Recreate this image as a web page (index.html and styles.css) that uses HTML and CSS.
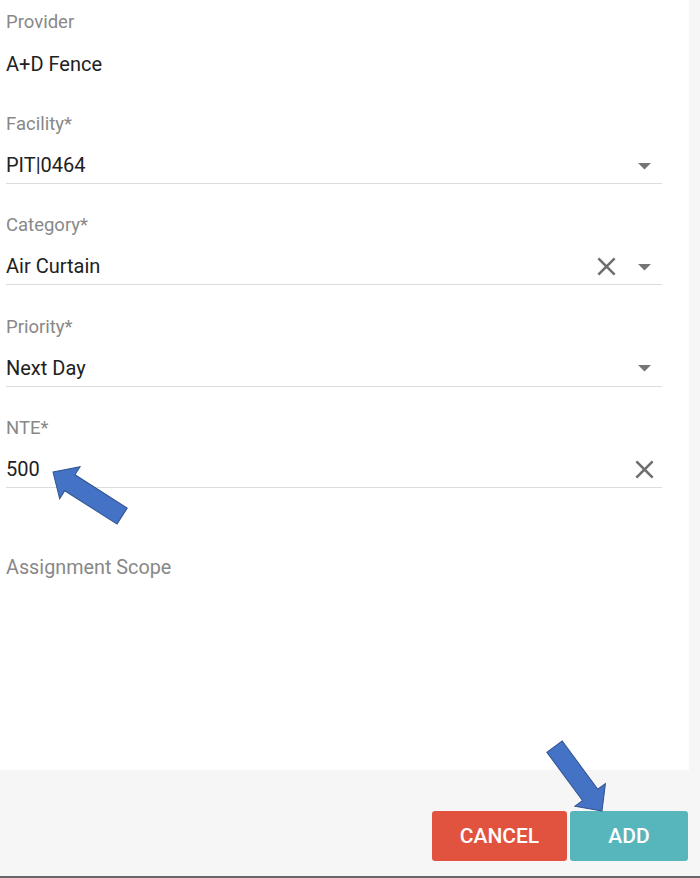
FILE: index.html
```html
<!DOCTYPE html>
<html lang="en">
<head>
    <meta charset="UTF-8">
    <meta name="viewport" content="width=device-width, initial-scale=1.0">
    <title>Add Assignment</title>
    <link rel="stylesheet" href="styles.css">
</head>
<body>
    <div class="panel">
        <div class="field provider">
            <div class="label">Provider</div>
            <div class="value-row">A+D Fence</div>
        </div>

        <div class="field">
            <div class="label">Facility*</div>
            <div class="value-row underlined">
                <span class="value">PIT|0464</span>
                <svg class="icon caret" viewBox="0 0 24 24"><path d="M7 10l5 5 5-5z"/></svg>
            </div>
        </div>

        <div class="field">
            <div class="label">Category*</div>
            <div class="value-row underlined">
                <span class="value">Air Curtain</span>
                <svg class="icon clear" viewBox="0 0 24 24"><path d="M19 6.41L17.59 5 12 10.59 6.41 5 5 6.41 10.59 12 5 17.59 6.41 19 12 13.41 17.59 19 19 17.59 13.41 12z"/></svg>
                <svg class="icon caret" viewBox="0 0 24 24"><path d="M7 10l5 5 5-5z"/></svg>
            </div>
        </div>

        <div class="field">
            <div class="label">Priority*</div>
            <div class="value-row underlined">
                <span class="value">Next Day</span>
                <svg class="icon caret" viewBox="0 0 24 24"><path d="M7 10l5 5 5-5z"/></svg>
            </div>
        </div>

        <div class="field">
            <div class="label">NTE*</div>
            <div class="value-row underlined">
                <span class="value">500</span>
                <svg class="icon clear" viewBox="0 0 24 24"><path d="M19 6.41L17.59 5 12 10.59 6.41 5 5 6.41 10.59 12 5 17.59 6.41 19 12 13.41 17.59 19 19 17.59 13.41 12z"/></svg>
            </div>
        </div>

        <div class="scope">Assignment Scope</div>
    </div>

    <div class="footer">
        <button class="btn cancel">Cancel</button>
        <button class="btn add">Add</button>
    </div>

    <!-- callout arrows drawn over the form -->
    <svg class="callouts" width="700" height="878" viewBox="0 0 700 878">
        <polygon transform="translate(53,472) rotate(32.5)" points="0,0 20,-19 20,-9.5 82,-9.5 82,9.5 20,9.5 20,19"/>
        <polygon transform="translate(602,811) rotate(233.6)" points="0,0 20,-19 20,-9.5 80,-9.5 80,9.5 20,9.5 20,19"/>
    </svg>
</body>
</html>
```

FILE: styles.css
```css
body {
    margin: 0;
    width: 700px;
    height: 878px;
    position: relative;
    overflow: hidden;
    background-color: #f6f6f6;
    font-family: Roboto, "Liberation Sans", sans-serif;
    color: #212121;
}
.panel {
    width: 689px;
    height: 770px;
    box-sizing: border-box;
    padding-top: 12px;
    padding-left: 6px;
    background-color: white;
}
.field {
    width: 656px;
    margin-bottom: 31.4px;
}
.provider {
    margin-bottom: 32px;
}
.label {
    font-size: 18.5px;
    line-height: 20px;
    color: #888;
}
.value-row {
    display: flex;
    align-items: center;
    height: 24px;
    margin-top: 19px;
    padding-bottom: 6px;
    border-bottom: 1px solid transparent;
    font-size: 20px;
    line-height: 24px;
}
.provider .value-row {
    margin-top: 20px;
    padding-bottom: 5px;
}
.underlined {
    border-bottom-color: #dcdcdc;
}
.value {
    flex: 1;
}
.icon {
    width: 31px;
    height: 31px;
    flex-shrink: 0;
}
.caret {
    fill: #757575;
    margin-right: 2px;
}
.clear {
    fill: #6e6e6e;
    margin-right: 2px;
}
.clear + .caret {
    margin-left: 5px;
}
.scope {
    padding-top: 37px;
    font-size: 19.8px;
    line-height: 22px;
    color: #888;
}
.footer {
    height: 108px;
    display: flex;
    justify-content: flex-end;
    align-items: flex-end;
    gap: 3px;
    padding-right: 12px;
    padding-bottom: 15px;
    box-sizing: border-box;
    border-bottom: 2px solid #666;
}
.btn {
    height: 50px;
    border: none;
    border-radius: 3px;
    color: white;
    font-family: Roboto, "Liberation Sans", sans-serif;
    font-size: 21px;
    font-weight: 500;
    text-transform: uppercase;
    cursor: pointer;
}
.cancel {
    width: 135px;
    background-color: #e2533f;
}
.add {
    width: 118px;
    background-color: #57b6bc;
}
.callouts {
    position: absolute;
    top: 0;
    left: 0;
    pointer-events: none;
}
.callouts polygon {
    fill: #4472c4;
    stroke: #2f528f;
    stroke-width: 1;
}
```
